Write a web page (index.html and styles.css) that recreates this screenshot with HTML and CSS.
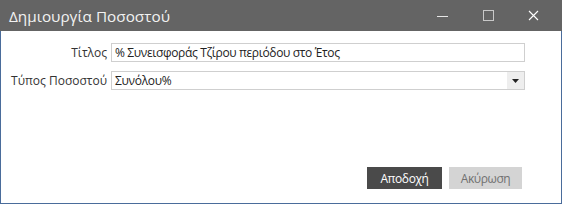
FILE: index.html
```html
<!DOCTYPE html>
<html lang="el">
<head>
<meta charset="utf-8">
<link rel="stylesheet" href="styles.css">
</head>
<body>
<div class="window">
  <div class="titlebar">
    <div class="title">Δημιουργία Ποσοστού</div>
    <div class="controls">
      <span class="ctl">
        <svg width="12" height="12" viewBox="0 0 12 12"><line x1="0" y1="6.5" x2="11" y2="6.5" stroke="#e6e6e6" stroke-width="1"/></svg>
      </span>
      <span class="ctl">
        <svg width="12" height="12" viewBox="0 0 12 12"><rect x="0.5" y="0.5" width="10" height="10" fill="none" stroke="#c8c8c8" stroke-width="1"/></svg>
      </span>
      <span class="ctl">
        <svg width="12" height="12" viewBox="0 0 12 12"><path d="M1 1 L10 10 M10 1 L1 10" stroke="#ffffff" stroke-width="1.1"/></svg>
      </span>
    </div>
  </div>
  <div class="body">
    <div class="form">
      <label class="lbl">Τίτλος</label>
      <div class="input">% Συνεισφοράς Τζίρου περιόδου στο Έτος</div>
      <label class="lbl">Τύπος Ποσοστού</label>
      <div class="select">
        <span class="value">Συνόλου%</span>
        <span class="arrow"><svg width="7" height="4" viewBox="0 0 7 4"><path d="M0 0 H7 L3.5 4 Z" fill="#222"/></svg></span>
      </div>
    </div>
    <div class="buttons">
      <button class="btn primary">Αποδοχή</button>
      <button class="btn secondary">Ακύρωση</button>
    </div>
  </div>
</div>
</body>
</html>
```

FILE: styles.css
```css
html, body {
  margin: 0;
  padding: 0;
  background: #ffffff;
}
body {
  font-family: "Open Sans", "Noto Sans", "Liberation Sans", sans-serif;
  font-size: 12px;
  color: #222;
}
.window {
  width: 562px;
  height: 204px;
  box-sizing: border-box;
  display: flex;
  flex-direction: column;
}
.titlebar {
  height: 31px;
  background: #646464;
  display: flex;
  align-items: center;
  justify-content: space-between;
  flex-shrink: 0;
}
.title {
  color: #f2f2f2;
  font-size: 15.3px;
  padding-left: 9px;
}
.controls {
  display: flex;
  height: 100%;
  padding-right: 5px;
}
.ctl {
  width: 45.5px;
  display: flex;
  align-items: center;
  justify-content: center;
}
.body {
  flex: 1;
  border-left: 1px solid #4a6c9b;
  border-right: 1px solid #4a6c9b;
  border-bottom: 1px solid #4a6c9b;
  display: flex;
  flex-direction: column;
  justify-content: space-between;
  padding: 12px 36px 14px 0;
}
.form {
  display: grid;
  grid-template-columns: 106px 1fr;
  column-gap: 4px;
  row-gap: 9px;
  align-items: center;
}
.lbl {
  text-align: right;
  color: #333;
}
.input, .select {
  height: 19px;
  box-sizing: border-box;
  border: 1px solid #cfcfcf;
  display: flex;
  align-items: center;
  padding-left: 3px;
  color: #222;
}
.input {
  letter-spacing: -0.35px;
}
.select {
  justify-content: space-between;
  padding-right: 0;
}
.value {
  letter-spacing: -0.3px;
}
.arrow {
  width: 17px;
  height: 17px;
  background: #eeeeee;
  display: flex;
  align-items: center;
  justify-content: center;
}
.buttons {
  display: flex;
  justify-content: flex-end;
  gap: 7px;
  padding-right: 3px;
}
.btn {
  font-family: inherit;
  font-size: 12px;
  letter-spacing: -0.4px;
  height: 22px;
  border: none;
  padding: 0;
}
.primary {
  width: 75px;
  background: #4a4a4a;
  color: #ffffff;
}
.secondary {
  width: 73px;
  background: #d4d4d4;
  color: #707070;
}
```
